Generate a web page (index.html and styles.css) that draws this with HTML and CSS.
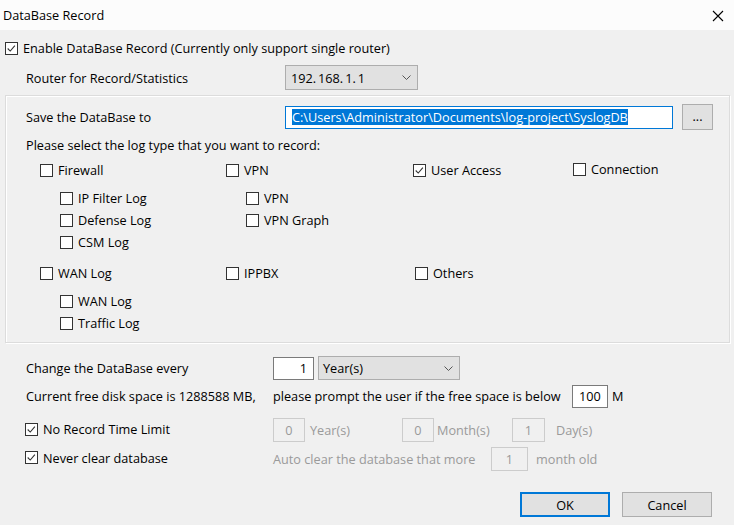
FILE: index.html
```html
<!DOCTYPE html>
<html>
<head>
<meta charset="utf-8">
<link rel="stylesheet" href="styles.css">
</head>
<body>
<div class="dialog">
  <div class="titlebar">
    <span class="title">DataBase Record</span>
    <svg class="close" width="12" height="12" viewBox="0 0 12 12"><path d="M1 1L11 11M11 1L1 11" stroke="#000" stroke-width="1.1" fill="none"/></svg>
  </div>

  <div class="enable">
    <span class="cb on"><svg viewBox="0 0 13 13"><polyline points="2,6.5 5,9.5 10.5,3" /></svg></span>
    <span class="txt">Enable DataBase Record (Currently only support single router)</span>
  </div>

  <div class="router">
    <span class="rlabel">Router for Record/Statistics</span>
    <div class="combo ip">
      <span>192.<i class="sp"></i>168.<i class="sp"></i>1.<i class="sp"></i>1</span>
      <svg class="chev" width="9" height="5" viewBox="0 0 9 5"><polyline points="0.5,0.5 4.5,4.5 8.5,0.5"/></svg>
    </div>
  </div>

  <div class="group">
    <div class="save">
      <span class="rlabel">Save the DataBase to</span>
      <div class="path"><span class="sel">C:\Users\Administrator\Documents\log-project\SyslogDB</span></div>
      <div class="btn dots">...</div>
    </div>
    <div class="prompt">Please select the log type that you want to record:</div>

    <div class="logs">
      <div class="col">
        <div class="item main"><span class="cb"></span><span>Firewall</span></div>
        <div class="subs">
          <div class="item"><span class="cb"></span><span>IP Filter Log</span></div>
          <div class="item"><span class="cb"></span><span>Defense Log</span></div>
          <div class="item"><span class="cb"></span><span>CSM Log</span></div>
        </div>
      </div>
      <div class="col">
        <div class="item main"><span class="cb"></span><span>VPN</span></div>
        <div class="subs">
          <div class="item"><span class="cb"></span><span>VPN</span></div>
          <div class="item"><span class="cb"></span><span>VPN Graph</span></div>
        </div>
      </div>
      <div class="col">
        <div class="item main"><span class="cb on"><svg viewBox="0 0 13 13"><polyline points="2,6.5 5,9.5 10.5,3" /></svg></span><span>User Access</span></div>
      </div>
      <div class="col">
        <div class="item main up"><span class="cb"></span><span>Connection</span></div>
      </div>

      <div class="col row2">
        <div class="item main"><span class="cb"></span><span>WAN Log</span></div>
        <div class="subs">
          <div class="item"><span class="cb"></span><span>WAN Log</span></div>
          <div class="item"><span class="cb"></span><span>Traffic Log</span></div>
        </div>
      </div>
      <div class="col row2">
        <div class="item main"><span class="cb"></span><span>IPPBX</span></div>
      </div>
      <div class="col row2 shift">
        <div class="item main"><span class="cb"></span><span>Others</span></div>
      </div>
      <div class="col row2"></div>
    </div>
  </div>

  <div class="bottom">
    <div class="brow r1">
      <span class="left">Change the DataBase every</span>
      <div class="right">
        <div class="field w40">1</div>
        <div class="combo yr"><span>Year(s)</span><svg class="chev" width="9" height="5" viewBox="0 0 9 5"><polyline points="0.5,0.5 4.5,4.5 8.5,0.5"/></svg></div>
      </div>
    </div>
    <div class="brow r2">
      <span class="left">Current free disk space is 1288588 MB,</span>
      <div class="right">
        <span class="ptxt">please prompt the user if the free space is below</span>
        <div class="field w35 center">100</div>
        <span class="unit">M</span>
      </div>
    </div>
    <div class="brow r3">
      <div class="left chk"><span class="cb on"><svg viewBox="0 0 13 13"><polyline points="2,6.5 5,9.5 10.5,3" /></svg></span><span>No Record Time Limit</span></div>
      <div class="right dis">
        <div class="field w31 off">0</div><span class="l-year">Year(s)</span>
        <div class="field w31 off">0</div><span class="l-month">Month(s)</span>
        <div class="field w32 off">1</div><span class="l-day">Day(s)</span>
      </div>
    </div>
    <div class="brow r4">
      <div class="left chk"><span class="cb on"><svg viewBox="0 0 13 13"><polyline points="2,6.5 5,9.5 10.5,3" /></svg></span><span>Never clear database</span></div>
      <div class="right dis">
        <span class="l-auto">Auto clear the database that more</span>
        <div class="field w36 off">1</div>
        <span class="l-old">month old</span>
      </div>
    </div>
  </div>

  <div class="buttons">
    <div class="btn push default">OK</div>
    <div class="btn push">Cancel</div>
  </div>
</div>
</body>
</html>
```

FILE: styles.css
```css
* { box-sizing: border-box; }
html, body { margin: 0; padding: 0; }
body {
  font-family: "Open Sans", "Noto Sans", sans-serif;
  font-size: 12.7px;
  color: #000;
  background: #f0f0f0;
}
.dialog {
  width: 734px;
  height: 525px;
  background: #f0f0f0;
  overflow: hidden;
}
.titlebar {
  height: 30px;
  background: #fcfcfc;
  display: flex;
  align-items: center;
  justify-content: space-between;
  padding: 0 10px 0 3px;
}
.close { display: block; margin-top: 1px; }

.cb {
  width: 13px;
  height: 13px;
  border: 1px solid #333;
  background: #fff;
  flex: none;
  display: block;
}
.cb svg { display: block; width: 11px; height: 11px; }
.cb svg polyline { fill: none; stroke: #333; stroke-width: 1.3; }

.enable {
  display: flex;
  align-items: center;
  height: 14px;
  margin-top: 11px;
  padding-left: 5px;
  gap: 5px;
}
.router {
  display: flex;
  align-items: center;
  margin-top: 10px;
  height: 25px;
  padding-left: 26px;
}
.rlabel { width: 259px; flex: none; }
.combo {
  background: #e1e1e1;
  border: 1px solid #adadad;
  display: flex;
  align-items: center;
  justify-content: space-between;
  padding: 0 6px 0 5px;
}
.combo.ip { width: 133px; height: 25px; }
.sp { display: inline-block; width: 2px; }
.chev polyline { fill: none; stroke: #555; stroke-width: 1; }

.group {
  margin: 5px 4px 0 5px;
  border: 1px solid #dcdcdc;
  box-shadow: inset 1px 1px 0 #fff, 1px 1px 0 #fff;
  height: 248px;
  padding: 8px 0 0 20px;
}
.save {
  display: flex;
  align-items: center;
  height: 26px;
}
.path {
  width: 388px;
  height: 23px;
  border: 1px solid #0078d7;
  background: #fff;
  display: flex;
  align-items: center;
  padding-left: 6px;
  flex: none;
  overflow: hidden;
  white-space: nowrap;
}
.sel {
  background: #0078d7;
  color: #fff;
  line-height: 16px;
}
.btn {
  background: #e1e1e1;
  border: 1px solid #adadad;
  display: flex;
  align-items: center;
  justify-content: center;
}
.dots { width: 31px; height: 26px; margin-left: 9px; padding-bottom: 2px; }
.prompt {
  margin-top: 7px;
  line-height: 16px;
}
.logs {
  display: grid;
  grid-template-columns: 186px 187px 160px 1fr;
  margin-top: 6px;
  margin-left: 14px;
}
.col.row2 { margin-top: 9px; }
.item {
  display: flex;
  align-items: center;
  gap: 5px;
  height: 22px;
  white-space: nowrap;
}
.item.up { margin-top: -1px; }
.subs { margin-top: 6px; margin-left: 20px; }
.col.shift { padding-left: 2px; }

.bottom { margin-top: 13px; }
.brow {
  display: flex;
  align-items: center;
  height: 24px;
  padding-left: 26px;
  white-space: nowrap;
}
.brow .left { width: 247px; flex: none; }
.brow .left.chk {
  display: flex;
  align-items: center;
  gap: 5px;
  margin-left: -1px;
  width: 248px;
  margin-top: -2px;
}
.brow.r4 .left.chk { margin-top: -3px; }
.right { display: flex; align-items: center; }
.r2 { margin-top: 4px; }
.r3 { margin-top: 10px; }
.r4 { margin-top: 5px; }

.field {
  height: 23px;
  background: #fff;
  border: 1px solid #7a7a7a;
  display: flex;
  align-items: center;
  justify-content: flex-end;
  padding-right: 6px;
  flex: none;
}
.field.center { justify-content: center; padding-right: 0; }
.field.off {
  height: 24px;
  background: #f0f0f0;
  border-color: #ccc;
  color: #9a9a9a;
  justify-content: center;
  padding-right: 0;
}
.w40 { width: 41px; }
.w35 { width: 36px; }
.w31 { width: 32px; }
.w32 { width: 33px; }
.w36 { width: 37px; }
.combo.yr { width: 142px; height: 24px; margin-left: 4px; padding-left: 4px; }
.ptxt { width: 299px; flex: none; }
.unit { margin-left: 4px; }
.dis { color: #9a9a9a; }
.l-year { margin-left: 5px; width: 92px; flex: none; }
.l-month { margin-left: 3px; width: 75px; flex: none; }
.l-day { margin-left: 11px; }
.l-auto { width: 218px; flex: none; }
.l-old { margin-left: 8px; }

.buttons {
  display: flex;
  justify-content: flex-end;
  gap: 12px;
  padding-right: 22px;
  margin-top: 21px;
}
.push { width: 90px; height: 25px; }
.push.default { border: 2px solid #0078d7; }
```
